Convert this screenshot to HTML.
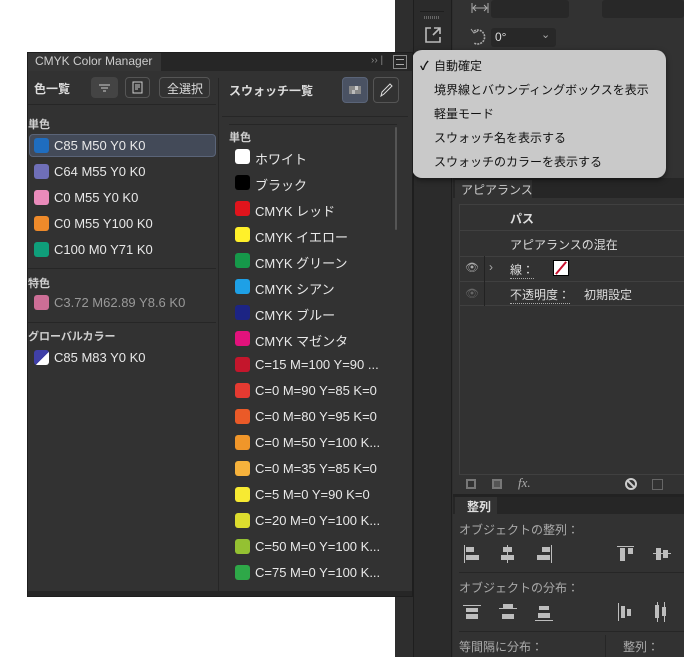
<!DOCTYPE html>
<html><head><meta charset="utf-8"><style>
*{margin:0;padding:0;box-sizing:border-box}
body{width:684px;height:657px;background:#fff;position:relative;overflow:hidden;font-family:"Liberation Sans","Noto Sans CJK JP",sans-serif;}
.a{position:absolute}
.t{position:absolute;white-space:nowrap;font-size:13px;color:#e8e8e8}
.sw{position:absolute;width:15px;height:15px;border-radius:3px}
.lbl{position:absolute;font-size:11px;color:#cfcfcf;font-weight:bold}
.mi{position:absolute;left:22px;font-size:12px;color:#111;white-space:nowrap}
.bar{position:absolute;background:#bdbdbd}
</style></head><body>
<div class="a" style="left:395px;top:0;width:289px;height:657px;background:#2e2e2e"></div>
<div class="a" style="left:413px;top:0;width:39px;height:657px;background:#2b2b2b;border-left:1px solid #1e1e1e;border-right:1px solid #1e1e1e"></div>
<div class="a" style="left:453px;top:0;width:231px;height:657px;background:#323232"></div>
<div class="a" style="left:420px;top:11px;width:24px;height:1px;background:#1e1e1e"></div>
<div class="a" style="left:424px;top:16px;width:16px;height:3px;background:repeating-linear-gradient(90deg,#666 0 1px,transparent 1px 2px)"></div>
<svg class="a" style="left:424px;top:26px" width="18" height="18"><path d="M7 2H2v14h14v-5M10 2h6v6M16 2l-7 7" stroke="#bbb" stroke-width="1.6" fill="none"/></svg>
<svg class="a" style="left:470px;top:1px" width="20" height="14"><path d="M2 2v10M18 2v10M3 7h14M6 4l-3 3 3 3M14 4l3 3-3 3" stroke="#aaa" fill="none"/></svg>
<div class="a" style="left:491px;top:0;width:78px;height:18px;background:#282828;border-radius:3px"></div>
<div class="a" style="left:602px;top:0;width:82px;height:18px;background:#282828;border-radius:3px"></div>
<svg class="a" style="left:468px;top:27px" width="22" height="20"><path d="M6 4a7 7 0 1 1 0 12" stroke="#aaa" stroke-width="1.6" fill="none" stroke-dasharray="2 1"/><path d="M3 2l3 4 4-2" stroke="#aaa" fill="none"/></svg>
<div class="a" style="left:491px;top:28px;width:65px;height:19px;background:#282828;border-radius:3px"></div>
<div class="t" style="left:495px;top:30px;font-size:12px;color:#ddd">0°</div>
<div class="t" style="left:541px;top:28px;font-size:11px;color:#aaa">⌄</div>
<div class="a" style="left:453px;top:178px;width:231px;height:20px;background:#262626"></div>
<div class="a" style="left:455px;top:180px;width:77px;height:18px;background:#323232"></div>
<div class="t" style="left:461px;top:181px;font-size:12px;color:#ccc">アピアランス</div>
<div class="a" style="left:459px;top:204px;width:230px;height:271px;border:1px solid #404040"></div>
<div class="a" style="left:459px;top:230px;width:225px;height:1px;background:#404040"></div>
<div class="a" style="left:459px;top:256px;width:225px;height:1px;background:#404040"></div>
<div class="a" style="left:459px;top:281px;width:225px;height:1px;background:#404040"></div>
<div class="a" style="left:459px;top:305px;width:225px;height:1px;background:#404040"></div>
<div class="a" style="left:484px;top:256px;width:1px;height:50px;background:#222"></div>
<div class="t" style="left:510px;top:210px;font-size:12px;color:#ddd;font-weight:bold">パス</div>
<div class="t" style="left:510px;top:236px;font-size:12px;color:#ddd">アピアランスの混在</div>
<div class="t" style="left:465px;top:261px;font-size:11px;color:#aaa">👁</div>
<div class="t" style="left:489px;top:260px;font-size:12px;color:#aaa">›</div>
<div class="t" style="left:510px;top:261px;font-size:12px;color:#ddd;border-bottom:1px dotted #aaa">線：</div>
<div class="a" style="left:553px;top:260px;width:16px;height:16px;background:#fff;border:1px solid #000"><div style="position:absolute;left:6px;top:-1px;width:2px;height:16px;background:#c8102e;transform:rotate(40deg)"></div></div>
<div class="t" style="left:465px;top:287px;font-size:11px;color:#666">👁</div>
<div class="t" style="left:510px;top:286px;font-size:12px;color:#ddd;border-bottom:1px dotted #aaa">不透明度：</div>
<div class="t" style="left:584px;top:286px;font-size:12px;color:#ddd">初期設定</div>
<div class="a" style="left:466px;top:479px;width:10px;height:10px;border:2px solid #777"></div>
<div class="a" style="left:492px;top:479px;width:10px;height:10px;border:2px solid #777;background:#555"></div>
<div class="t" style="left:518px;top:475px;font-size:13px;color:#aaa;font-style:italic;font-family:'Liberation Serif',serif">fx.</div>
<svg class="a" style="left:624px;top:477px" width="14" height="14"><circle cx="7" cy="7" r="5" stroke="#ccc" stroke-width="2" fill="none"/><path d="M3 3l8 8" stroke="#ccc" stroke-width="2"/></svg>
<div class="a" style="left:652px;top:479px;width:11px;height:11px;border:1px solid #666"></div>
<div class="a" style="left:453px;top:494px;width:231px;height:3px;background:#222"></div>
<div class="a" style="left:453px;top:497px;width:231px;height:17px;background:#262626"></div>
<div class="a" style="left:455px;top:497px;width:42px;height:17px;background:#323232"></div>
<div class="t" style="left:467px;top:498px;font-size:12px;color:#ddd;font-weight:bold">整列</div>
<div class="t" style="left:459px;top:521px;font-size:12px;color:#aaa">オブジェクトの整列：</div>
<div class="a" style="left:459px;top:572px;width:225px;height:1px;background:#262626"></div>
<div class="t" style="left:459px;top:579px;font-size:12px;color:#aaa">オブジェクトの分布：</div>
<div class="a" style="left:459px;top:631px;width:225px;height:1px;background:#262626"></div>
<div class="t" style="left:459px;top:638px;font-size:12px;color:#aaa">等間隔に分布：</div>
<div class="a" style="left:605px;top:635px;width:1px;height:22px;background:#262626"></div>
<div class="t" style="left:623px;top:638px;font-size:12px;color:#aaa">整列：</div>
<div class="bar" style="left:464px;top:545px;width:1px;height:18px"></div><div class="bar" style="left:466px;top:547px;width:8px;height:5px"></div><div class="bar" style="left:466px;top:555px;width:13px;height:5px"></div>
<div class="bar" style="left:507px;top:545px;width:1px;height:18px"></div><div class="bar" style="left:503px;top:547px;width:9px;height:5px"></div><div class="bar" style="left:501px;top:555px;width:13px;height:5px"></div>
<div class="bar" style="left:551px;top:545px;width:1px;height:18px"></div><div class="bar" style="left:542px;top:547px;width:8px;height:5px"></div><div class="bar" style="left:537px;top:555px;width:13px;height:5px"></div>
<div class="bar" style="left:617px;top:546px;width:17px;height:1px"></div><div class="bar" style="left:620px;top:548px;width:5px;height:13px"></div><div class="bar" style="left:628px;top:548px;width:5px;height:6px"></div>
<div class="bar" style="left:653px;top:553px;width:18px;height:1px"></div><div class="bar" style="left:656px;top:548px;width:5px;height:12px"></div><div class="bar" style="left:663px;top:550px;width:5px;height:8px"></div>
<div class="bar" style="left:463px;top:605px;width:18px;height:1px"></div><div class="bar" style="left:466px;top:608px;width:12px;height:4px"></div><div class="bar" style="left:466px;top:614px;width:12px;height:5px"></div>
<div class="bar" style="left:499px;top:608px;width:18px;height:1px"></div><div class="bar" style="left:503px;top:604px;width:10px;height:4px"></div><div class="bar" style="left:502px;top:614px;width:12px;height:5px"></div>
<div class="bar" style="left:535px;top:620px;width:18px;height:1px"></div><div class="bar" style="left:539px;top:606px;width:10px;height:4px"></div><div class="bar" style="left:538px;top:613px;width:12px;height:5px"></div>
<div class="bar" style="left:618px;top:603px;width:1px;height:18px"></div><div class="bar" style="left:621px;top:606px;width:4px;height:12px"></div><div class="bar" style="left:627px;top:609px;width:4px;height:7px"></div>
<div class="bar" style="left:655px;top:605px;width:4px;height:13px"></div><div class="bar" style="left:662px;top:607px;width:4px;height:9px"></div><div class="bar" style="left:657px;top:602px;width:1px;height:20px"></div><div class="bar" style="left:664px;top:602px;width:1px;height:20px"></div>

<div class="a" style="left:412px;top:50px;width:254px;height:128px;background:#c9c9c9;border-radius:10px;box-shadow:0 2px 6px rgba(0,0,0,.5)">
 <div class="mi" style="left:8px;top:7px;font-weight:bold">✓</div>
 <div class="mi" style="top:7px">自動確定</div>
 <div class="mi" style="top:31px">境界線とバウンディングボックスを表示</div>
 <div class="mi" style="top:55px">軽量モード</div>
 <div class="mi" style="top:79px">スウォッチ名を表示する</div>
 <div class="mi" style="top:103px">スウォッチのカラーを表示する</div>
</div>

<div class="a" style="left:27px;top:52px;width:386px;height:545px;background:#323232;border:1px solid #1e1e1e"></div>
<div class="a" style="left:28px;top:53px;width:384px;height:18px;background:#262626"></div>
<div class="a" style="left:28px;top:53px;width:133px;height:18px;background:#353535"></div>
<div class="t" style="left:35px;top:54px;font-size:12px;color:#ccc">CMYK Color Manager</div>
<div class="t" style="left:371px;top:55px;font-size:10px;color:#888">›› |</div>
<div class="a" style="left:393px;top:55px;width:14px;height:14px;border:1px solid #888"><div style="margin:3px 2px;height:6px;border-top:1px solid #aaa;border-bottom:1px solid #aaa"></div></div>
<div class="a" style="left:218px;top:78px;width:1px;height:513px;background:#262626"></div>
<div class="a" style="left:28px;top:591px;width:384px;height:5px;background:#262626"></div>
<div class="t" style="left:34px;top:80px;font-size:12px;font-weight:bold;color:#ddd">色一覧</div>
<div class="a" style="left:91px;top:77px;width:27px;height:21px;background:#444;border-radius:4px"><svg width="27" height="21"><path d="M8 8h11M10 11h7M12 14h3" stroke="#ccc"/></svg></div>
<div class="a" style="left:125px;top:77px;width:25px;height:21px;border:1px solid #555;border-radius:4px"><svg width="23" height="19"><rect x="7" y="4" width="9" height="11" stroke="#ccc" fill="none"/><path d="M9 7h5M9 9h5M9 11h3" stroke="#ccc"/></svg></div>
<div class="a" style="left:159px;top:77px;width:51px;height:21px;border:1px solid #555;border-radius:4px"></div>
<div class="t" style="left:167px;top:80px;font-size:12px;color:#ddd">全選択</div>
<div class="a" style="left:28px;top:104px;width:188px;height:1px;background:#262626"></div>
<div class="lbl" style="left:28px;top:116px">単色</div>
<div class="a" style="left:29px;top:134px;width:187px;height:23px;background:#434a58;border:1px solid #5a6478;border-radius:4px"></div>
<div class="sw" style="left:34px;top:138px;background:#1f6dbf"></div><div class="t" style="left:54px;top:138px">C85 M50 Y0 K0</div>
<div class="sw" style="left:34px;top:164px;background:#6f6fb8"></div><div class="t" style="left:54px;top:164px">C64 M55 Y0 K0</div>
<div class="sw" style="left:34px;top:190px;background:#ea8bbb"></div><div class="t" style="left:54px;top:190px">C0 M55 Y0 K0</div>
<div class="sw" style="left:34px;top:216px;background:#ee8a2a"></div><div class="t" style="left:54px;top:216px">C0 M55 Y100 K0</div>
<div class="sw" style="left:34px;top:242px;background:#0f9e7a"></div><div class="t" style="left:54px;top:242px">C100 M0 Y71 K0</div>
<div class="a" style="left:28px;top:268px;width:188px;height:1px;background:#262626"></div>
<div class="lbl" style="left:28px;top:275px">特色</div>
<div class="sw" style="left:34px;top:295px;background:#cc6e96"></div><div class="t" style="left:54px;top:295px;color:#999">C3.72 M62.89 Y8.6 K0</div>
<div class="a" style="left:28px;top:322px;width:188px;height:1px;background:#262626"></div>
<div class="lbl" style="left:28px;top:328px">グローバルカラー</div>
<div class="sw" style="left:34px;top:350px;background:linear-gradient(135deg,#4040a8 55%,#fff 56%)"></div><div class="t" style="left:54px;top:350px">C85 M83 Y0 K0</div>

<div class="t" style="left:229px;top:82px;font-size:12px;font-weight:bold;color:#ddd">スウォッチ一覧</div>
<div class="a" style="left:342px;top:77px;width:26px;height:26px;background:#4a5263;border-radius:4px;border:1px solid #5a6478"><svg width="24" height="24"><rect x="6" y="8" width="12" height="8" fill="#888"/><rect x="12" y="8" width="3" height="4" fill="#ccc"/><rect x="9" y="12" width="3" height="4" fill="#bbb"/></svg></div>
<div class="a" style="left:373px;top:77px;width:26px;height:26px;border:1px solid #555;border-radius:4px"><svg width="24" height="24"><path d="M7 18l1-4 8-8 2 2-8 8z" stroke="#ddd" fill="none"/></svg></div>
<div class="a" style="left:222px;top:116px;width:186px;height:1px;background:#262626"></div>
<div class="a" style="left:229px;top:124px;width:168px;height:1px;background:#262626"></div>
<div class="a" style="left:395px;top:127px;width:2px;height:103px;background:#555;border-radius:1px"></div>
<div class="lbl" style="left:229px;top:129px">単色</div>
<div style="position:absolute;left:235px;top:149px">
<div class="sw" style="left:0;top:0;background:#fff"></div><div class="t" style="left:20px;top:0">ホワイト</div>
<div class="sw" style="left:0;top:26px;background:#000"></div><div class="t" style="left:20px;top:26px">ブラック</div>
<div class="sw" style="left:0;top:52px;background:#e0141c"></div><div class="t" style="left:20px;top:52px">CMYK レッド</div>
<div class="sw" style="left:0;top:78px;background:#fff02a"></div><div class="t" style="left:20px;top:78px">CMYK イエロー</div>
<div class="sw" style="left:0;top:104px;background:#16994a"></div><div class="t" style="left:20px;top:104px">CMYK グリーン</div>
<div class="sw" style="left:0;top:130px;background:#1ea0e6"></div><div class="t" style="left:20px;top:130px">CMYK シアン</div>
<div class="sw" style="left:0;top:156px;background:#1c2484"></div><div class="t" style="left:20px;top:156px">CMYK ブルー</div>
<div class="sw" style="left:0;top:182px;background:#e2127c"></div><div class="t" style="left:20px;top:182px">CMYK マゼンタ</div>
<div class="sw" style="left:0;top:208px;background:#c4162c"></div><div class="t" style="left:20px;top:208px">C=15 M=100 Y=90 ...</div>
<div class="sw" style="left:0;top:234px;background:#e53a31"></div><div class="t" style="left:20px;top:234px">C=0 M=90 Y=85 K=0</div>
<div class="sw" style="left:0;top:260px;background:#ea5a28"></div><div class="t" style="left:20px;top:260px">C=0 M=80 Y=95 K=0</div>
<div class="sw" style="left:0;top:286px;background:#f0962a"></div><div class="t" style="left:20px;top:286px">C=0 M=50 Y=100 K...</div>
<div class="sw" style="left:0;top:312px;background:#f6b23c"></div><div class="t" style="left:20px;top:312px">C=0 M=35 Y=85 K=0</div>
<div class="sw" style="left:0;top:338px;background:#f7ea32"></div><div class="t" style="left:20px;top:338px">C=5 M=0 Y=90 K=0</div>
<div class="sw" style="left:0;top:364px;background:#dcdc2e"></div><div class="t" style="left:20px;top:364px">C=20 M=0 Y=100 K...</div>
<div class="sw" style="left:0;top:390px;background:#94c132"></div><div class="t" style="left:20px;top:390px">C=50 M=0 Y=100 K...</div>
<div class="sw" style="left:0;top:416px;background:#2ea848"></div><div class="t" style="left:20px;top:416px">C=75 M=0 Y=100 K...</div>
</div>
</body></html>
